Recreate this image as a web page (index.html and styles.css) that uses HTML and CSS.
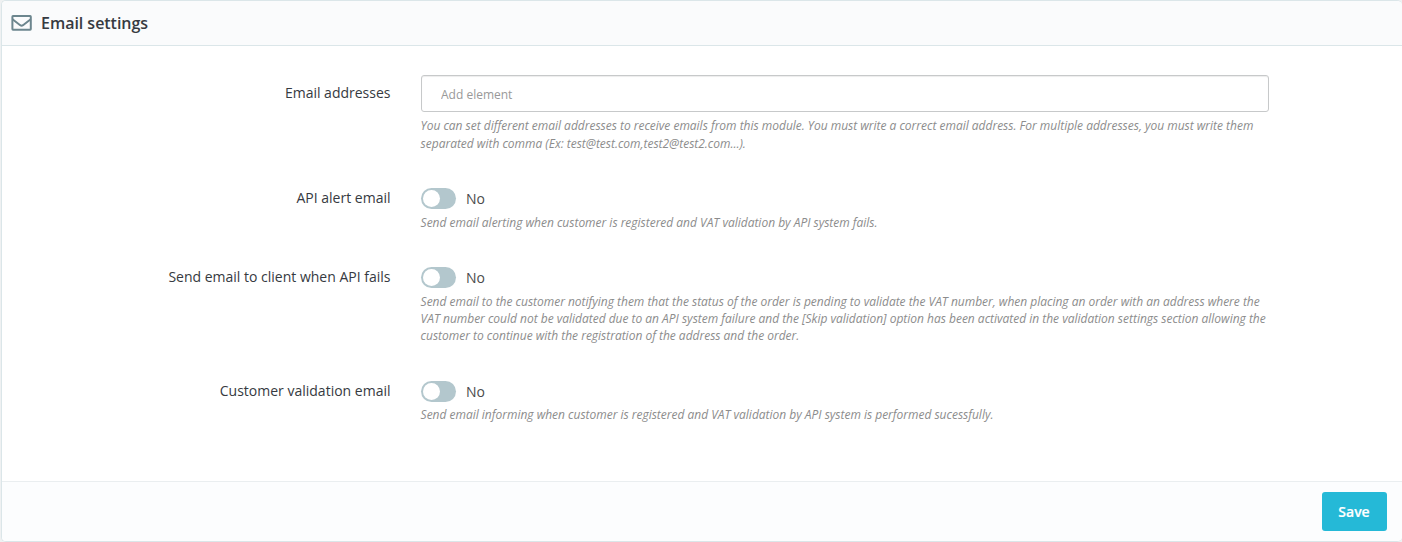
FILE: index.html
```html
<!DOCTYPE html>
<html lang="en">
<head>
<meta charset="utf-8">
<title>Email settings</title>
<link rel="stylesheet" href="styles.css">
</head>
<body>
<form class="card">
  <header class="card-header">
    <svg class="mail" width="21" height="16" viewBox="0 0 21 16" fill="none" stroke="#6c868e" stroke-width="2"><rect x="1.4" y="1.1" width="18.4" height="13.6" rx=".6"/><path d="M1.5 4.2 L9.2 10.2 Q10.6 11.1 12 10.2 L19.7 4.2"/></svg>
    <h1>Email settings</h1>
  </header>
  <main class="card-body">
    <div class="row addresses">
      <label class="label">Email addresses</label>
      <div class="field">
        <input class="input" type="text" placeholder="Add element">
        <p class="help">You can set different email addresses to receive emails from this module. You must write a correct email address. For multiple addresses, you must write them<br>separated with comma (Ex: test@test.com,test2@test2.com...).</p>
      </div>
    </div>
    <div class="row alert">
      <label class="label">API alert email</label>
      <div class="field">
        <div class="toggle"><span class="switch"></span><span>No</span></div>
        <p class="help">Send email alerting when customer is registered and VAT validation by API system fails.</p>
      </div>
    </div>
    <div class="row client">
      <label class="label">Send email to client when API fails</label>
      <div class="field">
        <div class="toggle"><span class="switch"></span><span>No</span></div>
        <p class="help">Send email to the customer notifying them that the status of the order is pending to validate the VAT number, when placing an order with an address where the<br>VAT number could not be validated due to an API system failure and the [Skip validation] option has been activated in the validation settings section allowing the<br>customer to continue with the registration of the address and the order.</p>
      </div>
    </div>
    <div class="row customer">
      <label class="label">Customer validation email</label>
      <div class="field">
        <div class="toggle"><span class="switch"></span><span>No</span></div>
        <p class="help">Send email informing when customer is registered and VAT validation by API system is performed sucessfully.</p>
      </div>
    </div>
  </main>
  <footer class="card-footer"><button class="save" type="button">Save</button></footer>
</form>
</body>
</html>
```
FILE: styles.css
```css
* { box-sizing: border-box; }
body { margin: 0; background: #eff1f2; color: #363a41; font: 14px/21px "Open Sans", sans-serif; }
.card { display: flex; flex-direction: column; height: 542px; margin-left: 1px; border: 1px solid #dbe6e9; border-right: 0; border-radius: 5px; background: #fff; overflow: hidden; }
.card-header { display: flex; align-items: center; gap: 9px; height: 45px; padding-left: 9px; background: #fafbfc; border-bottom: 1px solid #dbe6e9; }
.card-header h1 { margin: 0; font-size: 16px; font-weight: 600; line-height: 24px; letter-spacing: -0.03px; }
.card-body { flex: 1; padding-top: 29px; }
.row { display: grid; grid-template-columns: 389px 848px; column-gap: 30px; }
.addresses { height: 113px; }
.alert { height: 79px; }
.client { height: 114px; }
.label { padding: 7px .5px 0 0; text-align: right; }
.row + .row .label { padding-top: 0; margin-top: -1px; }
.input { display: block; width: 100%; height: 37px; padding: 2px 19px 0; border: 1px solid #c7c9ca; border-radius: 3px; box-shadow: inset 0 1px 1px rgba(0, 0, 0, .075); font: 12px "Open Sans", sans-serif; }
.input::placeholder { color: #999; opacity: 1; }
.help { margin: 5px 0 0 -.4px; color: #8c8c8c; font-size: 12px; font-style: italic; line-height: 17.5px; letter-spacing: -0.013px; white-space: nowrap; }
.toggle { display: flex; align-items: center; gap: 10px; height: 21px; color: #4b4b4b; }
.toggle + .help { line-height: 17px; }
.customer .help { margin-top: 4px; }
.switch { width: 35px; height: 21px; padding: 2px; border-radius: 11px; background: #b3c7cd; }
.switch::before { content: ""; display: block; width: 17px; height: 17px; border-radius: 50%; background: #fff; }
.card-footer { display: flex; align-items: center; justify-content: flex-end; height: 60px; padding-right: 15px; border-top: 1px solid #eaeef0; background: #fcfdfe; }
.save { width: 65px; height: 39px; padding: 0 1px 0 0; border: 0; border-radius: 3px; background: #25b9d7; color: #fff; font: 600 14px "Open Sans", sans-serif; -webkit-text-stroke: .2px #fff; }
```
